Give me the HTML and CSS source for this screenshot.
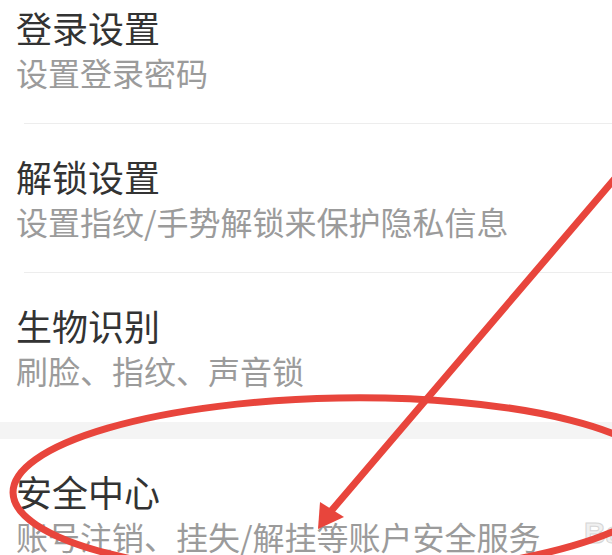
FILE: index.html
```html
<!DOCTYPE html>
<html lang="zh-CN">
<head>
    <meta charset="UTF-8">
    <meta name="viewport" content="width=device-width, initial-scale=1.0">
    <title>设置</title>
    <link rel="stylesheet" href="styles.css">
</head>
<body>
    <div class="screen">
        <ul class="settings first">
            <li class="item">
                <div class="title">登录设置</div>
                <div class="desc">设置登录密码</div>
            </li>
            <li class="item">
                <div class="title">解锁设置</div>
                <div class="desc">设置指纹/手势解锁来保护隐私信息</div>
            </li>
            <li class="item last">
                <div class="title">生物识别</div>
                <div class="desc">刷脸、指纹、声音锁</div>
            </li>
        </ul>
        <div class="section-gap"></div>
        <ul class="settings">
            <li class="item">
                <div class="title">安全中心</div>
                <div class="desc">账号注销、挂失/解挂等账户安全服务</div>
            </li>
        </ul>

        <span class="watermark">Bai</span>

        <svg class="marks" width="612" height="555" viewBox="0 0 612 555">
            <ellipse cx="340" cy="487" rx="327" ry="89" transform="rotate(-1 340 487)"
                     fill="none" stroke="#e8453c" stroke-width="7"/>
            <line x1="640" y1="149" x2="326" y2="517" stroke="#e8453c" stroke-width="7" stroke-linecap="round"/>
            <polygon points="318,529 320,502 344,517" fill="#e8453c"/>
        </svg>
    </div>
</body>
</html>
```

FILE: styles.css
```css
body {
    margin: 0;
    background-color: #fff;
    font-family: "Noto Sans CJK SC", "Noto Sans", sans-serif;
}
.screen {
    position: relative;
    width: 612px;
    height: 555px;
    overflow: hidden;
    background: #fff;
}
.settings {
    list-style: none;
    margin: 0;
    padding: 0;
}
.settings.first {
    margin-top: -25px;
}
.item {
    padding: 30px 0 32px 16px;
    background: linear-gradient(#ededed, #ededed) no-repeat 24px 100% / 100% 1px;
}
.item.last {
    background: none;
}
.title {
    font-size: 36px;
    line-height: 44px;
    color: #333;
}
.desc {
    margin-top: 3px;
    font-size: 32px;
    line-height: 40px;
    color: #9b9b9b;
}
.section-gap {
    height: 17px;
    background-color: #f4f4f4;
}
.watermark {
    position: absolute;
    left: 584px;
    top: 516px;
    font-family: "Liberation Sans", Arial, sans-serif;
    font-size: 30px;
    font-weight: bold;
    color: #f0f0f0;
    -webkit-text-stroke: 1px #d6d6d6;
}
.marks {
    position: absolute;
    left: 0;
    top: 0;
}
```
